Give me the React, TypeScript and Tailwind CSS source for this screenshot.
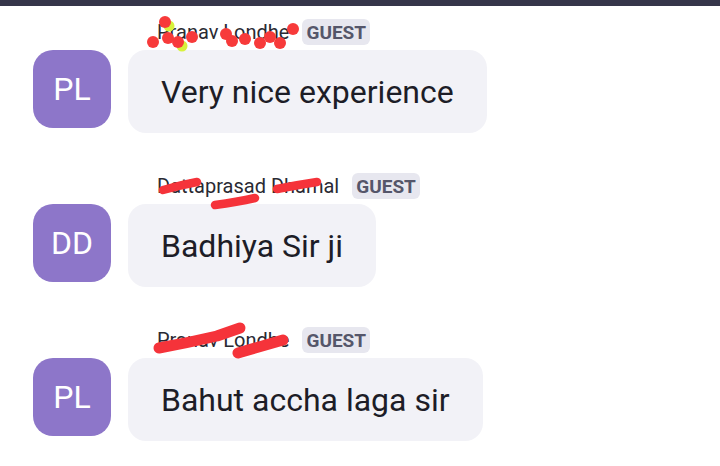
import React from "react";

type Msg = {
  initials: string;
  name: string;
  text: string;
  mark: "dots" | "strokes" | "swipe";
};

const messages: Msg[] = [
  { initials: "PL", name: "Pranav Londhe", text: "Very nice experience", mark: "dots" },
  { initials: "DD", name: "Dattaprasad Dhamal", text: "Badhiya Sir ji", mark: "strokes" },
  { initials: "PL", name: "Pranav Londhe", text: "Bahut accha laga sir", mark: "swipe" },
];

// red redaction marks drawn over the names (coords relative to name row, offset -10/-10)
function Redaction({ kind }: { kind: Msg["mark"] }) {
  if (kind === "dots") {
    const dots: [number, number][] = [
      [18, 13], [6, 33], [21, 29], [31, 33], [45, 28], [79, 25], [85, 32],
      [98, 30], [113, 34], [123, 28], [133, 34], [146, 20],
    ];
    return (
      <svg className="pointer-events-none absolute left-[-10px] top-[-10px]" width="170" height="50">
        <circle cx="22" cy="17" r="5.5" fill="#d8f23c" />
        <circle cx="35" cy="37" r="5.5" fill="#d8f23c" />
        {dots.map(([x, y], i) => (
          <circle key={i} cx={x} cy={y} r="6" fill="#f73a3a" />
        ))}
      </svg>
    );
  }
  if (kind === "strokes") {
    return (
      <svg className="pointer-events-none absolute left-[-10px] top-[-10px]" width="190" height="50" fill="none" stroke="#f5333a" strokeLinecap="round" strokeWidth="8.5">
        <path d="M16 27 Q34 22 50 19" />
        <path d="M68 42 Q90 39 108 35" />
        <path d="M130 26 Q150 22 170 19" />
      </svg>
    );
  }
  return (
    <svg className="pointer-events-none absolute left-[-10px] top-[-10px]" width="190" height="50" fill="none" stroke="#f5333a" strokeLinecap="round" strokeLinejoin="round">
      <path d="M12 31 Q40 26 70 19 L93 11" strokeWidth="11" />
      <path d="M91 36 Q112 30 136 23" strokeWidth="11" />
    </svg>
  );
}

function Message({ msg }: { msg: Msg }) {
  return (
    <div>
      <div className="relative ml-[124px] flex h-[26px] items-center gap-[13px]">
        <span className="text-[20px] leading-none text-[#2a2a33]">{msg.name}</span>
        <span className="flex h-[26px] items-center rounded-[6px] bg-[#e7e7ef] px-[4px] text-[19px] font-bold leading-none text-[#55566a]">
          GUEST
        </span>
        <Redaction kind={msg.mark} />
      </div>
      <div className="mt-[5px] flex gap-[17px]">
        <div className="flex h-[78px] w-[78px] shrink-0 items-center justify-center rounded-[20px] bg-[#8d76c9] text-[32px] text-white">
          {msg.initials}
        </div>
        <div className="flex h-[83px] items-center rounded-[18px] bg-[#f2f2f7] px-[33px] text-[32px] text-[#1d1d27]">
          {msg.text}
        </div>
      </div>
    </div>
  );
}

export default function App() {
  return (
    <div className="h-[466px] w-[720px] overflow-hidden bg-white font-['Roboto',sans-serif]">
      <div className="h-[6px] bg-[#35354a]" />
      <div className="flex flex-col gap-[40px] pl-[33px] pt-[13px]">
        {messages.map((m, i) => (
          <Message key={i} msg={m} />
        ))}
      </div>
    </div>
  );
}
